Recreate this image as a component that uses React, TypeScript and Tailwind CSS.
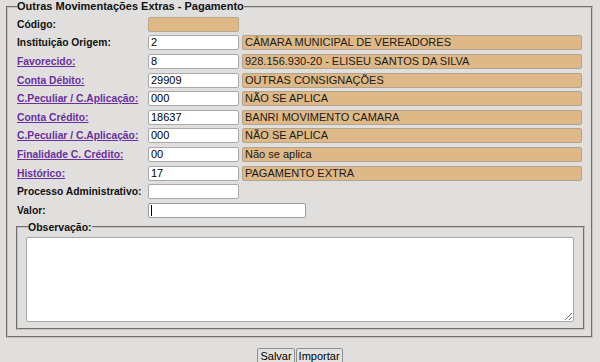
import React from "react";

type Row = {
  label: string;
  link?: boolean;
  value?: string;
  desc?: string;
  tanOnly?: boolean;
  wide?: boolean;
  caret?: boolean;
};

const rows: Row[] = [
  { label: "Código:", tanOnly: true },
  { label: "Instituição Origem:", value: "2", desc: "CÂMARA MUNICIPAL DE VEREADORES" },
  { label: "Favorecido:", link: true, value: "8", desc: "928.156.930-20 - ELISEU SANTOS DA SILVA" },
  { label: "Conta Débito:", link: true, value: "29909", desc: "OUTRAS CONSIGNAÇÕES" },
  { label: "C.Peculiar / C.Aplicação:", link: true, value: "000", desc: "NÃO SE APLICA" },
  { label: "Conta Crédito:", link: true, value: "18637", desc: "BANRI MOVIMENTO CAMARA" },
  { label: "C.Peculiar / C.Aplicação:", link: true, value: "000", desc: "NÃO SE APLICA" },
  { label: "Finalidade C. Crédito:", link: true, value: "00", desc: "Não se aplica" },
  { label: "Histórico:", link: true, value: "17", desc: "PAGAMENTO EXTRA" },
  { label: "Processo Administrativo:", value: "" },
  { label: "Valor:", value: "", wide: true, caret: true },
];

function FormRow({ r }: { r: Row }) {
  return (
    <div className="flex h-[18.6px] items-center">
      <div className="w-[131px] shrink-0 whitespace-nowrap text-[10.3px] font-bold leading-[13px]">
        {r.link ? (
          <span className="text-[#6a2fa0] underline decoration-1 underline-offset-[1px]">{r.label}</span>
        ) : (
          <span className="text-[#111]">{r.label}</span>
        )}
      </div>
      {r.tanOnly ? (
        <div className="h-[15px] w-[91px] rounded-[2px] border border-[#b9a88e] bg-[#deb887]" />
      ) : (
        <div
          className={
            r.wide
              ? "flex h-[15px] w-[158px] items-center rounded-[2px] border border-[#9a9a9a] bg-white pl-[2px] leading-[13px] text-black"
              : "flex h-[15px] w-[91px] items-center rounded-[2px] border border-[#a9a9a9] bg-white pl-[2px] leading-[13px] text-black"
          }
        >
          {r.caret ? <span className="h-[11px] w-[1px] bg-black" /> : r.value}
        </div>
      )}
      {r.desc !== undefined && (
        <div className="ml-[3px] flex h-[15px] w-[340px] items-center rounded-[2px] border border-[#b3a48d] bg-[#deb887] pl-[2px] leading-[13px] text-[#1a1a1a]">
          {r.desc}
        </div>
      )}
    </div>
  );
}

export default function App() {
  return (
    <div className="h-[362px] w-[600px] overflow-hidden bg-[#e0dfdd] font-['Liberation_Sans',Arial,sans-serif] text-[11px] text-black">
      <fieldset className="ml-[6px] w-[587px] border-2 border-[#c4c3c1] pb-[6px] pl-[9px] pr-[6px] pt-[2px] [border-style:groove]">
        <legend className="p-0 font-bold leading-[13px] text-[#111]">Outras Movimentações Extras - Pagamento</legend>
        <div className="flex flex-col">
          {rows.map((r, i) => (
            <FormRow key={i} r={r} />
          ))}
        </div>
        <fieldset className="-ml-[1px] mt-[1px] w-[569px] border-2 border-[#c4c3c1] pb-[6px] pl-[8px] pt-[3px] [border-style:groove]">
          <legend className="ml-[2px] p-0 text-[10.5px] font-bold leading-[13px] text-[#111]">Observação:</legend>
          <textarea
            readOnly
            className="block h-[85px] w-[548px] rounded-[2px] border border-[#a9a9a9] bg-white"
          />
        </fieldset>
      </fieldset>
      <div className="mt-[10px] flex justify-center gap-[1px]">
        <button className="h-[17px] rounded-[2px] border border-[#8f8f8f] bg-[#e3e2e0] px-[2px] leading-[13px] text-[11px] text-black">
          Salvar
        </button>
        <button className="h-[17px] rounded-[2px] border border-[#8f8f8f] bg-[#e3e2e0] px-[2px] leading-[13px] text-[11px] text-black">
          Importar
        </button>
      </div>
    </div>
  );
}
